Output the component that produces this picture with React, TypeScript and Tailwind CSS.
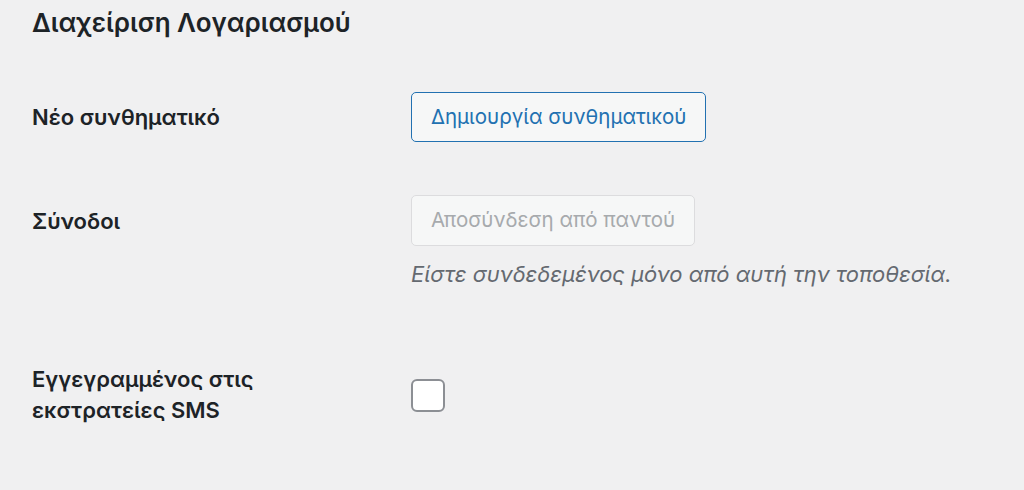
import React from "react";

export default function App() {
  return (
    <div
      className="min-h-[490px] w-[1024px] bg-[#f0f0f1] px-[32px] text-[#1d2327]"
      style={{ fontFamily: "Inter, 'Noto Sans', 'Liberation Sans', sans-serif" }}
    >
      <h2 className="pt-[7px] text-[26px] font-semibold leading-[32px]">
        Διαχείριση Λογαριασμού
      </h2>

      <div className="mt-[53px] flex items-center">
        <div className="w-[379px] text-[22px] font-semibold leading-[30px]">
          Νέο συνθηματικό
        </div>
        <button className="h-[50px] rounded-[5px] border border-[#2271b1] bg-[#f6f7f7] px-[19px] text-[20.5px] text-[#2271b1]">
          Δημιουργία συνθηματικού
        </button>
      </div>

      <div className="mt-[53px] flex items-start">
        <div className="flex h-[51px] w-[379px] items-center text-[22px] font-semibold leading-[30px]">
          Σύνοδοι
        </div>
        <div className="flex flex-col items-start">
          <button className="h-[51px] rounded-[5px] border border-[#dcdcde] bg-[#f6f7f7] px-[19px] text-[20.5px] text-[#a7aaad]">
            Αποσύνδεση από παντού
          </button>
          <p className="mt-[13px] text-[22px] italic leading-[30px] text-[#646970]">
            Είστε συνδεδεμένος μόνο από αυτή την τοποθεσία.
          </p>
        </div>
      </div>

      <div className="mt-[75px] flex items-center">
        <div className="w-[379px] pr-[100px] text-[22px] font-semibold leading-[31px]">
          Εγγεγραμμένος στις εκστρατείες SMS
        </div>
        <div className="h-[33px] w-[34px] rounded-[6px] border-2 border-[#8c8f94] bg-white" />
      </div>
    </div>
  );
}
